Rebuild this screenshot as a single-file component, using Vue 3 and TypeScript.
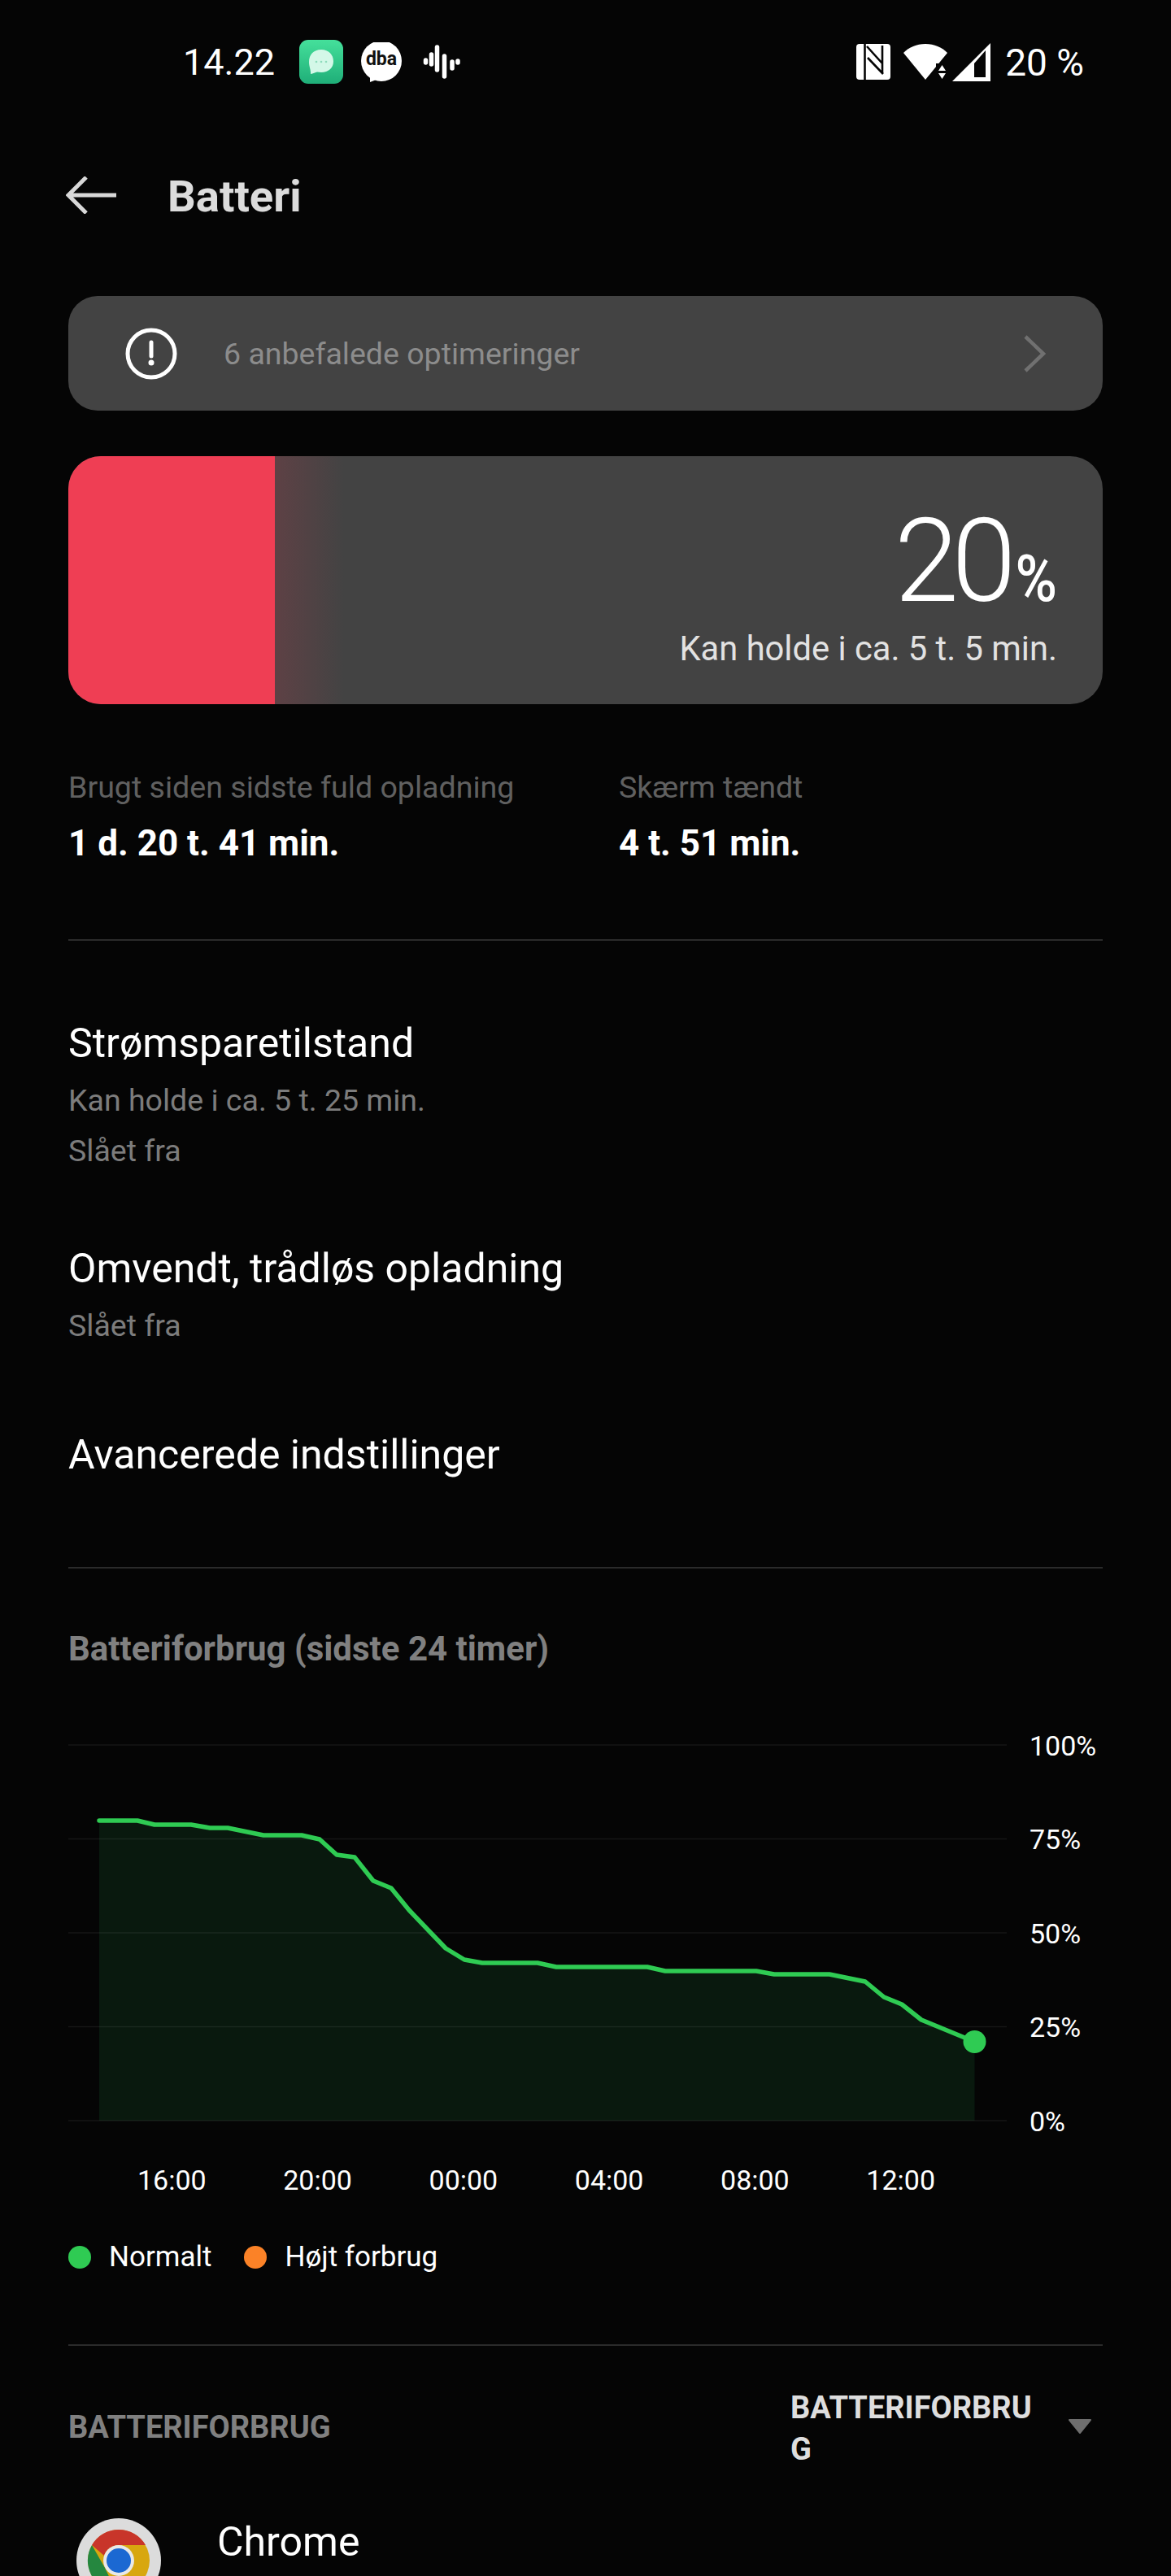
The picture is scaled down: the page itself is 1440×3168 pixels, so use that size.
<template>
  <div class="page">
    <div class="status-bar">
      <div class="status-left">
        <span class="clock">14.22</span>
        <svg class="ic-msg" width="54" height="54" viewBox="0 0 54 54">
          <defs>
            <linearGradient id="msgGrad" x1="0" y1="0" x2="0" y2="1">
              <stop offset="0" stop-color="#45e09b" />
              <stop offset="1" stop-color="#1fae78" />
            </linearGradient>
          </defs>
          <rect width="54" height="54" rx="11" fill="url(#msgGrad)" />
          <path d="M27 12c-9.5 0-15 6.500-15 15 0 6 2.500 10 2 15 3-.5 6-2 8-2.500 1.500.3 3.500.5 5 .5 9 0 15-5.500 15-13.500S36.500 12 27 12z" fill="#d4f8e8" />
          <circle cx="21" cy="27" r="1.3" fill="#8fdcbc" />
          <circle cx="27" cy="27" r="1.3" fill="#8fdcbc" />
          <circle cx="33" cy="27" r="1.3" fill="#8fdcbc" />
        </svg>
        <div class="ic-dba">
          <svg width="50" height="49" viewBox="0 0 50 49">
            <circle cx="25" cy="23" r="25" fill="#fff" />
            <path d="M11 40L11 49L24 44z" fill="#fff" />
          </svg>
          <span class="dba-text">dba</span>
        </div>
        <svg class="ic-wave" width="44" height="42" viewBox="0 0 44 42" fill="none" stroke="#fff" stroke-width="5.5" stroke-linecap="round">
          <path d="M2.500 19v3M9.500 12v12M16.500 3v28M25.500 14v25M35 21v8M42 20v2" />
        </svg>
      </div>
      <div class="status-right">
        <svg width="42" height="44" viewBox="0 0 42 44">
          <rect width="42" height="44" rx="4" fill="#fff" />
          <path d="M10.500 0v44M13 3l19 21M32 2v34M14 17l19 20" fill="none" stroke="#050505" stroke-width="2.6" />
        </svg>
        <svg class="ic-wifi" width="54" height="44" viewBox="0 0 54 44">
          <path fill="#fff" d="M0 11C7 4 16 0 27 0s20 4 27 11L27 44z" />
          <path fill="#050505" d="M40 24h14v20H40z" />
          <path fill="#fff" d="M47.500 26l4.500 7h-9zM47.500 43L43 36h9z" />
        </svg>
        <svg class="ic-signal" width="47" height="47" viewBox="0 0 47 47">
          <path fill="#fff" fill-rule="evenodd" d="M47 0v47H0zM41 9L27 25v17h14z" />
        </svg>
        <span class="clock batt">20 %</span>
      </div>
    </div>

    <div class="title-bar">
      <svg width="62" height="46" viewBox="0 0 62 46" fill="none" stroke="#d8d8d8" stroke-width="5">
        <path d="M25 1L3 23l22 22M3 23h59" />
      </svg>
      <h1 class="title">Batteri</h1>
    </div>

    <div class="content">
      <div class="notice">
        <svg width="64" height="64" viewBox="0 0 64 64" fill="none">
          <circle cx="32" cy="32" r="29" stroke="#fff" stroke-width="5" />
          <path d="M32 18v17" stroke="#fff" stroke-width="5" stroke-linecap="round" />
          <circle cx="32" cy="43" r="3.5" fill="#fff" />
        </svg>
        <span class="notice-text">6 anbefalede optimeringer</span>
        <svg width="28" height="46" viewBox="0 0 28 46" fill="none" stroke="#707070" stroke-width="4.5">
          <path d="M3 2l22 21L3 44" />
        </svg>
      </div>

      <div class="battery-card">
        <div class="battery-fill" :style="{ width: batteryFillWidth + 'px' }"></div>
        <div class="battery-fade"></div>
        <div class="battery-info">
          <div class="percent"><span class="percent-num">20</span><span class="percent-sign">%</span></div>
          <div class="battery-time">Kan holde i ca. 5 t. 5 min.</div>
        </div>
      </div>

      <div class="stats">
        <div class="stat stat-used">
          <div class="stat-label">Brugt siden sidste fuld opladning</div>
          <div class="stat-value">1 d. 20 t. 41 min.</div>
        </div>
        <div class="stat">
          <div class="stat-label">Skærm tændt</div>
          <div class="stat-value">4 t. 51 min.</div>
        </div>
      </div>

      <div class="divider"></div>

      <div class="settings">
        <div class="setting">
          <div class="setting-title">Strømsparetilstand</div>
          <div class="setting-sub first">Kan holde i ca. 5 t. 25 min.</div>
          <div class="setting-sub">Slået fra</div>
        </div>
        <div class="setting setting-reverse">
          <div class="setting-title">Omvendt, trådløs opladning</div>
          <div class="setting-sub first">Slået fra</div>
        </div>
        <div class="setting setting-advanced">
          <div class="setting-title">Avancerede indstillinger</div>
        </div>
      </div>

      <div class="divider"></div>

      <h2 class="usage-title">Batteriforbrug (sidste 24 timer)</h2>

      <div class="chart">
        <svg class="chart-svg" width="1154" height="500" viewBox="0 0 1154 500">
          <path :d="areaPath" fill="#09190e" />
          <line v-for="y in gridLines" :key="y" x1="0" x2="1154" :y1="y" :y2="y" stroke="#ffffff" stroke-opacity="0.07" stroke-width="1.5" />
          <path :d="linePath" fill="none" stroke="#2fcb53" stroke-width="5.5" stroke-linejoin="round" stroke-linecap="round" />
          <circle :cx="lastPoint[0]" :cy="lastPoint[1]" r="14" fill="#2fcb53" />
        </svg>
        <div class="y-labels">
          <span v-for="label in yLabels" :key="label">{{ label }}</span>
        </div>
      </div>

      <div class="x-labels">
        <span v-for="label in xLabels" :key="label">{{ label }}</span>
      </div>

      <div class="legend">
        <span class="dot dot-green"></span>
        <span class="legend-label">Normalt</span>
        <span class="dot dot-orange"></span>
        <span class="legend-label">Højt forbrug</span>
      </div>

      <div class="divider"></div>

      <div class="usage-head">
        <span class="usage-head-title">BATTERIFORBRUG</span>
        <div class="usage-sort">
          <span class="usage-sort-label">BATTERIFORBRUG</span>
          <svg width="30" height="20" viewBox="0 0 30 20">
            <path d="M2 2h26L15 18z" fill="#6e6e6e" stroke="#6e6e6e" stroke-width="2" stroke-linejoin="round" />
          </svg>
        </div>
      </div>

      <div class="app-row">
        <svg class="chrome" width="104" height="104" viewBox="0 0 104 104">
          <circle cx="52" cy="52" r="52" fill="#dcdcdc" />
          <circle cx="52" cy="52" r="38" fill="#d8a70f" />
          <path d="M52 14a38 38 0 0 1 33 19H52a19 19 0 0 0-18 13L19 33a38 38 0 0 1 33-19z" fill="#c8352a" />
          <path d="M19 33l16 28 14 29a38 38 0 0 1-30-57z" fill="#25873f" />
          <circle cx="52" cy="52" r="19" fill="#e8e8e8" />
          <circle cx="52" cy="52" r="15" fill="#1b68d2" />
        </svg>
        <div class="app-name">Chrome</div>
      </div>
    </div>
  </div>
</template>

<script setup lang="ts">
import { computed } from 'vue'

// chart origin on the page is x=84, y=2144
const points: [number, number][] = [
  [122, 2238], [169, 2238], [190, 2243], [235, 2243], [258, 2247], [280, 2247],
  [324, 2256], [371, 2256], [393, 2261], [414, 2280], [436, 2283], [459, 2312],
  [481, 2321], [503, 2348], [548, 2395], [571, 2409], [593, 2413], [661, 2413],
  [684, 2418], [796, 2418], [818, 2423], [930, 2423], [952, 2427], [1020, 2427],
  [1064, 2436], [1087, 2455], [1109, 2464], [1133, 2483], [1198.5, 2510]
]

const chartPoints = points.map(([x, y]): [number, number] => [x - 84, y - 2144])
const lastPoint = chartPoints[chartPoints.length - 1]
const gridLines = [1, 116.5, 232, 347.5, 463]
const batteryFillWidth = 254

const yLabels = ['100%', '75%', '50%', '25%', '0%']
const xLabels = ['16:00', '20:00', '00:00', '04:00', '08:00', '12:00']

const linePath = computed(() =>
  chartPoints.map(([x, y], i) => `${i === 0 ? 'M' : 'L'}${x} ${y}`).join(' ')
)

const areaPath = computed(() => {
  const first = chartPoints[0]
  return `${linePath.value} L${lastPoint[0]} 463 L${first[0]} 463 Z`
})
</script>

<style scoped>
.page {
  width: 1440px;
  height: 3168px;
  overflow: hidden;
  background: #050505;
  font-family: Roboto, "Liberation Sans", sans-serif;
  color: #fff;
}

.status-bar {
  height: 152px;
  padding: 49px 107px 0 225px;
  box-sizing: border-box;
  display: flex;
  justify-content: space-between;
  align-items: flex-start;
}

.status-left,
.status-right {
  display: flex;
  align-items: center;
  height: 54px;
}

.status-right svg {
  display: block;
}

.clock {
  font-size: 45px;
  line-height: 54px;
  padding-top: 2px;
  white-space: nowrap;
}

.ic-msg {
  margin-left: 30px;
}

.ic-dba {
  position: relative;
  width: 50px;
  height: 49px;
  margin-left: 22px;
}

.dba-text {
  position: absolute;
  left: 0;
  right: 0;
  top: 6px;
  text-align: center;
  color: #111;
  font-size: 23px;
  line-height: 30px;
  font-weight: 700;
}

.ic-wave {
  margin-left: 27px;
  overflow: visible;
}

.ic-wifi {
  margin-left: 16px;
}

.ic-signal {
  margin-left: 6px;
}

.batt {
  margin-left: 18px;
  font-size: 46px;
}

.title-bar {
  height: 176px;
  padding: 65px 0 0 81px;
  box-sizing: border-box;
  display: flex;
  align-items: flex-start;
  gap: 63px;
}

.title {
  margin: 1px 0 0;
  font-size: 54.5px;
  line-height: 46px;
  font-weight: 700;
  color: #dcdcdc;
}

.content {
  padding: 36px 84px 0;
}

.notice {
  height: 141px;
  background: #434343;
  border-radius: 36px;
  display: flex;
  align-items: center;
  padding: 0 70px;
}

.notice-text {
  margin-left: 57px;
  flex: 1;
  font-size: 37.5px;
  color: #8c8c8c;
}

.battery-card {
  position: relative;
  height: 305px;
  margin-top: 56px;
  border-radius: 40px;
  background: #434343;
  overflow: hidden;
}

.battery-fill {
  position: absolute;
  left: 0;
  top: 0;
  bottom: 0;
  background: #ef3e54;
}

.battery-fade {
  position: absolute;
  left: 254px;
  top: 0;
  bottom: 0;
  width: 85px;
  background: linear-gradient(to right, #5e4145, #434343);
}

.battery-info {
  position: absolute;
  right: 56px;
  top: 35px;
  text-align: right;
}

.percent {
  height: 176.5px;
  line-height: 188px;
  white-space: nowrap;
}

.percent-num {
  font-size: 143px;
  font-weight: 300;
  letter-spacing: -9px;
}

.percent-sign {
  display: inline-block;
  margin-left: 8px;
  font-size: 70px;
  font-weight: 500;
  transform: scaleY(1.14);
  transform-origin: 50% 62.8%;
}

.battery-time {
  font-size: 41.7px;
  line-height: 50px;
  color: #e2e2e2;
  white-space: nowrap;
}

.stats {
  display: flex;
  margin-top: 80px;
  height: 208.5px;
}

.stat-used {
  width: 677px;
}

.stat-label {
  font-size: 37.6px;
  line-height: 44px;
  color: #606060;
}

.stat-value {
  margin-top: 22px;
  font-size: 44px;
  line-height: 50px;
  font-weight: 700;
}

.divider {
  height: 2px;
  background: #2b2b2b;
}

.settings {
  height: 770px;
  box-sizing: border-box;
  padding-top: 94px;
}

.setting-title {
  font-size: 50px;
  line-height: 64px;
}

.setting-sub {
  font-size: 37.5px;
  line-height: 62px;
  color: #7c7c7c;
}

.setting-sub.first {
  margin-top: 7px;
}

.setting-reverse {
  margin-top: 82px;
}

.setting-advanced {
  margin-top: 96px;
}

.usage-title {
  margin: 74px 0 0;
  font-size: 42px;
  line-height: 50px;
  font-weight: 700;
  color: #808080;
}

.chart {
  display: flex;
  margin-top: 92px;
  height: 501px;
}

.chart-svg {
  display: block;
  flex: none;
}

.y-labels {
  display: flex;
  flex-direction: column;
  justify-content: space-between;
  margin-left: 28px;
  height: 502px;
  margin-top: -18px;
  font-size: 34px;
  line-height: 40px;
  white-space: nowrap;
}

.x-labels {
  display: flex;
  gap: 94.6px;
  margin-top: 15px;
  padding-left: 85px;
  font-size: 34px;
  line-height: 40px;
}

.legend {
  display: flex;
  align-items: center;
  margin: 53px 0 85px;
  font-size: 35px;
  line-height: 44px;
}

.dot {
  width: 28px;
  height: 28px;
  border-radius: 50%;
}

.dot-green {
  background: #2fcb53;
}

.dot-orange {
  margin-left: 40px;
  background: #fb8227;
}

.legend-label {
  margin-left: 22px;
}

.usage-head {
  display: flex;
  justify-content: space-between;
  align-items: flex-start;
  height: 212.5px;
  box-sizing: border-box;
  padding-top: 51px;
}

.usage-head-title {
  margin-top: 24px;
  font-size: 38px;
  line-height: 51px;
  font-weight: 700;
  color: #808080;
}

.usage-sort {
  display: flex;
  align-items: flex-start;
  gap: 31px;
  padding-right: 13px;
}

.usage-sort svg {
  margin-top: 38px;
}

.usage-sort-label {
  width: 310px;
  font-size: 38px;
  line-height: 51px;
  font-weight: 700;
  color: #dedede;
  word-break: break-all;
}

.app-row {
  display: flex;
  padding-left: 10px;
}

.chrome {
  display: block;
  flex: none;
}

.app-name {
  margin: -1px 0 0 69px;
  font-size: 50px;
  line-height: 60px;
}
</style>
